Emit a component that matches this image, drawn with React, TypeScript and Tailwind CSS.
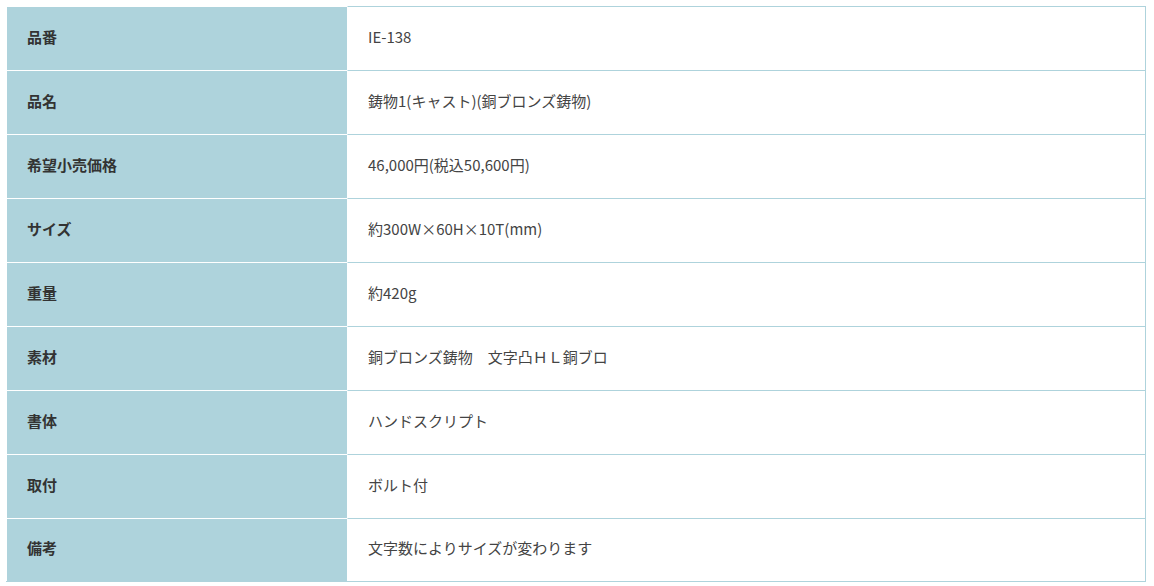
import React from "react";

const rows: [string, string][] = [
  ["品番", "IE-138"],
  ["品名", "鋳物1(キャスト)(銅ブロンズ鋳物)"],
  ["希望小売価格", "46,000円(税込50,600円)"],
  ["サイズ", "約300W×60H×10T(mm)"],
  ["重量", "約420g"],
  ["素材", "銅ブロンズ鋳物　文字凸ＨＬ銅ブロ"],
  ["書体", "ハンドスクリプト"],
  ["取付", "ボルト付"],
  ["備考", "文字数によりサイズが変わります"],
];

const App: React.FC = () => {
  return (
    <div
      className="w-[1154px] h-[586px] bg-white pt-[6px] pl-[6px]"
      style={{ fontFamily: '"Noto Sans CJK JP", "Noto Sans", sans-serif' }}
    >
      <div className="w-[1140px] border-b border-[#aed3dc]">
        {rows.map(([label, value], i) => (
          <div key={label} className={i === rows.length - 1 ? "flex h-[63px]" : "flex h-[64px]"}>
            {/* label cell */}
            <div className="w-[341px] flex items-center pl-[20px] pb-[3px] bg-[#aed3dc] border-l border-t border-white text-[15px] font-bold text-[#333]">
              {label}
            </div>
            {/* value cell */}
            <div className="flex-1 flex items-center pl-[20px] pb-[3px] border-l border-l-white border-t border-t-[#aed3dc] border-r border-r-[#aed3dc] text-[15px] text-[#444]">
              {value}
            </div>
          </div>
        ))}
      </div>
    </div>
  );
};

export default App;
